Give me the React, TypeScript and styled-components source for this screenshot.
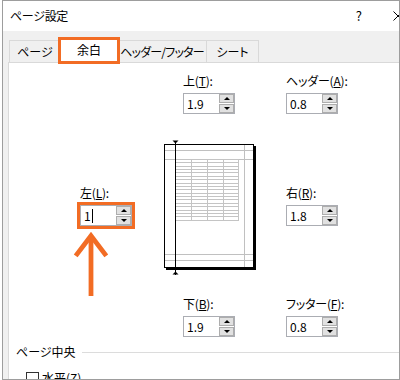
import React from 'react'
import styled, { createGlobalStyle } from 'styled-components'

const ORANGE = '#f26c24'

const GlobalStyle = createGlobalStyle`
body {
  margin: 0;
  background: #fff;
  font-family: "Noto Sans CJK JP", "Noto Sans", sans-serif;
  font-size: 12px;
  color: #000;
  font-feature-settings: "palt";
}
`

const Frame = styled.div`
box-sizing: border-box;
width: 398px;
height: 380px;
margin-left: 2px;
border: 1px solid #9d9d9d;
overflow: hidden;
display: flex;
flex-direction: column;
background: #f0f0f0;
`

const TitleBar = styled.div`
flex: none;
box-sizing: border-box;
width: 420px;
height: 30px;
padding: 0 20px 0 7px;
background: #fff;
display: flex;
align-items: center;
line-height: 16px;
`

const TitleText = styled.span`
flex: 1;
letter-spacing: -0.3px;
`

const HelpMark = styled.span`
font-size: 13px;
margin-right: 31px;
`

const Body = styled.div`
flex: 1;
display: flex;
flex-direction: column;
padding-top: 6px;
`

const TabStrip = styled.div`
display: flex;
align-items: flex-end;
padding-left: 6px;
position: relative;
z-index: 1;
`

const Tab = styled.div<{ $w: number; $active?: boolean; $tight?: boolean }>`
box-sizing: border-box;
width: ${p => p.$w}px;
height: 22px;
margin-left: -1px;
border: 1px solid #d9d9d9;
border-bottom: none;
background: #f0f0f0;
display: flex;
align-items: center;
justify-content: center;
line-height: 16px;
white-space: nowrap;
letter-spacing: ${p => p.$tight ? '-0.8px' : '0'};

&:first-child {
  margin-left: 0;
}

${p => p.$active && `
  position: relative;
  z-index: 2;
  height: 27px;
  margin: 0 -2px -2px -3px;
  border: 3px solid ${ORANGE};
  background: #fff;
  padding-bottom: 2px;
`}
`

const Panel = styled.div`
flex: 1;
margin: 0 -10px 0 5px;
background: #fff;
border-top: 1px solid #d9d9d9;
border-left: 1px solid #d9d9d9;
`

const MarginGrid = styled.div`
display: grid;
grid-template-columns: 84px 122px auto;
grid-template-rows: auto 182px auto;
padding: 10px 0 0 71px;
`

const Cell = styled.div<{ $col: number; $row: number; $top?: number; $left?: number }>`
grid-column: ${p => p.$col};
grid-row: ${p => p.$row};
display: flex;
flex-direction: column;
align-items: flex-start;
padding-top: ${p => p.$top || 0}px;
padding-left: ${p => p.$left || 0}px;
`

const Field = styled.div`
display: flex;
flex-direction: column;
align-items: flex-start;
gap: 4px;
`

const Label = styled.label`
line-height: 16px;
white-space: nowrap;
letter-spacing: -0.2px;
`

const SpinBox = styled.div<{ $focus?: boolean }>`
box-sizing: border-box;
width: 52px;
height: 21px;
border: 1px solid #abadb3;
background: #fff;
display: flex;
align-items: center;
${p => p.$focus && `outline: 3px solid ${ORANGE};`}
`

const SpinValue = styled.span`
flex: 1;
padding-left: 3px;
line-height: 17px;
display: flex;
align-items: center;
`

const Caret = styled.span`
display: inline-block;
width: 1px;
height: 14px;
margin-left: 1px;
background: #000;
`

const SpinButtons = styled.div`
display: grid;
grid-template-rows: 9px 9px;
gap: 1px;
width: 15px;
height: 19px;
`

const SpinBtn = styled.div<{ $down?: boolean }>`
box-sizing: border-box;
border: 1px solid #adadad;
background: #e1e1e1;
display: flex;
align-items: center;
justify-content: center;

&::after {
  content: '';
  width: 0;
  height: 0;
  border-left: 3px solid transparent;
  border-right: 3px solid transparent;
  ${p => p.$down ? 'border-top: 3px solid #000;' : 'border-bottom: 3px solid #000;'}
}
`

const Arrow = styled.svg`
margin: 5px 0 0 -9px;
`

const Preview = styled.svg`
margin-top: 26px;
`

const Group = styled.div`
padding: 7px 0 0 7px;
`

const GroupTitle = styled.div`
display: flex;
align-items: center;
gap: 6px;
line-height: 16px;

&::after {
  content: '';
  flex: 1;
  border-top: 1px solid #dcdcdc;
}
`

const CheckRow = styled.div`
display: flex;
align-items: center;
gap: 3px;
margin: 10px 0 0 10px;
line-height: 16px;
`

const CheckBox = styled.span`
box-sizing: border-box;
width: 13px;
height: 13px;
border: 1px solid #333;
background: #fff;
`

type SpinProps = {
  label: React.ReactNode,
  value: string,
  focus?: boolean,
}

const SpinField: React.FC<SpinProps> = ({ label, value, focus }) => (
  <Field>
    <Label>{label}</Label>
    <SpinBox $focus={focus}>
      <SpinValue>{value}{focus && <Caret />}</SpinValue>
      <SpinButtons>
        <SpinBtn />
        <SpinBtn $down />
      </SpinButtons>
    </SpinBox>
  </Field>
)

const rowLines = Array.from({ length: 19 }, (_, i) => Math.round(19 + i * 3.37) + 0.5)
const colLines = [27.5, 43.5, 59.5, 74.5]

const PagePreview = () => (
  <Preview width="96" height="136" viewBox="0 0 96 136">
    <rect x="2" y="6" width="90" height="124" fill="#000" />
    <rect x="0.5" y="4.5" width="89" height="123" fill="#fff" stroke="#000" />
    {[10.5, 19.5, 114.5, 120.5].map(y => (
      <line key={y} x1="1" x2="89" y1={y} y2={y} stroke="#c0c0c0" />
    ))}
    <line x1="80.5" x2="80.5" y1="5" y2="127" stroke="#c0c0c0" />
    {rowLines.map(y => (
      <line key={y} x1="11" x2="75" y1={y} y2={y} stroke="#c4c4c4" />
    ))}
    {colLines.map(x => (
      <line key={x} x1={x} x2={x} y1="19.5" y2={rowLines[rowLines.length - 1]} stroke="#c4c4c4" />
    ))}
    <line x1="11.5" x2="11.5" y1="1" y2="135" stroke="#000" />
    <polygon points="8.5,0.5 14.5,0.5 11.5,3.5" fill="#000" />
    <polygon points="8.5,134.5 14.5,134.5 11.5,131.5" fill="#000" />
  </Preview>
)

export default function App() {
  return <>
    <GlobalStyle />
    <Frame>
      <TitleBar>
        <TitleText>ページ設定</TitleText>
        <HelpMark>?</HelpMark>
        <svg width="10" height="10" viewBox="0 0 10 10">
          <path d="M0.5 0.5L9.5 9.5M9.5 0.5L0.5 9.5" stroke="#000" strokeWidth="1" />
        </svg>
      </TitleBar>

      <Body>
        <TabStrip>
          <Tab $w={52}>ページ</Tab>
          <Tab $w={62} $active>余白</Tab>
          <Tab $w={90} $tight>ヘッダー/フッター</Tab>
          <Tab $w={53}>シート</Tab>
        </TabStrip>

        <Panel>
          <MarginGrid>
            <Cell $col={2} $row={1} $left={19}>
              <SpinField label={<>上(<u>T</u>):</>} value="1.9" />
            </Cell>
            <Cell $col={3} $row={1}>
              <SpinField label={<>ヘッダー(<u>A</u>):</>} value="0.8" />
            </Cell>

            <Cell $col={1} $row={2} $top={71}>
              <SpinField label={<>左(<u>L</u>):</>} value="1" focus />
              <Arrow width="40" height="68" viewBox="0 0 40 68">
                <polyline points="4,26 20,5 36,26" fill="none" stroke={ORANGE} strokeWidth="5" />
                <line x1="20" x2="20" y1="6" y2="68" stroke={ORANGE} strokeWidth="5" />
              </Arrow>
            </Cell>
            <Cell $col={2} $row={2}>
              <PagePreview />
            </Cell>
            <Cell $col={3} $row={2} $top={71}>
              <SpinField label={<>右(<u>R</u>):</>} value="1.8" />
            </Cell>

            <Cell $col={2} $row={3} $left={19}>
              <SpinField label={<>下(<u>B</u>):</>} value="1.9" />
            </Cell>
            <Cell $col={3} $row={3}>
              <SpinField label={<>フッター(<u>F</u>):</>} value="0.8" />
            </Cell>
          </MarginGrid>

          <Group>
            <GroupTitle>ページ中央</GroupTitle>
            <CheckRow>
              <CheckBox />
              <span>水平(<u>Z</u>)</span>
            </CheckRow>
          </Group>
        </Panel>
      </Body>
    </Frame>
  </>
}
